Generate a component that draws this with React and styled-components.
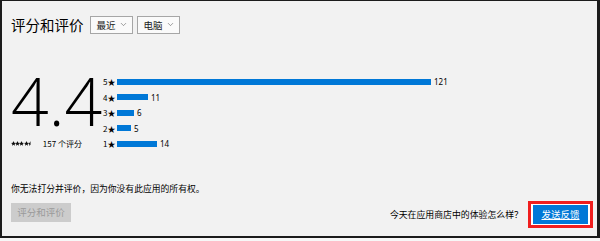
import React from 'react';
import styled, { createGlobalStyle } from 'styled-components';
import { ChevronDown } from 'lucide-react';

const GlobalStyle = createGlobalStyle`
	body {
		margin: 0;
		background-color: #f7f7f7;
		font-family: "Noto Sans CJK SC", "Noto Sans", sans-serif;
		color: #000;
	}
`;

const Frame = styled.div`
	box-sizing: border-box;
	width: 600px;
	height: 238px;
	background-color: #f2f2f2;
	border-top: 1px solid #1c1c1c;
	border-left: 2px solid #1c1c1c;
	border-right: 3px solid #1c1c1c;
	border-bottom: 2px solid #1c1c1c;
	padding: 0 4px 0 9px;
	display: flex;
	flex-direction: column;
`;

const Header = styled.div`
	display: flex;
	align-items: center;
	gap: 4px;
	margin-top: 14px;
	height: 19px;
`;

const Title = styled.h2`
	margin: 0 2px 0 0;
	font-size: 14.5px;
	font-weight: 400;
	line-height: 19px;
`;

const Dropdown = styled.div`
	box-sizing: border-box;
	width: 43px;
	height: 18px;
	border: 1px solid #a6a6a6;
	background-color: #fafafa;
	display: flex;
	align-items: center;
	justify-content: space-between;
	padding: 0 4px 0 6px;
	font-size: 9.5px;
	color: #222;
`;

const Summary = styled.div`
	display: flex;
	margin-top: 40px;
`;

const RatingBlock = styled.div`
	width: 92px;
	display: flex;
	flex-direction: column;
`;

const BigNumber = styled.div`
	font-family: "Open Sans", sans-serif;
	font-weight: 300;
	font-size: 66px;
	line-height: 66px;
	margin-top: -7px;
`;

const StarLine = styled.div`
	display: flex;
	align-items: center;
	margin-top: 4px;
	height: 12px;
	font-size: 8px;
	gap: 10px;
	white-space: nowrap;
`;

const Stars = styled.span`
	display: flex;
	align-items: center;
	gap: 0;
	& > svg + svg {
		margin-left: -0.8px;
	}
`;

const Histogram = styled.div`
	display: flex;
	flex-direction: column;
`;

const Row = styled.div`
	display: flex;
	align-items: center;
	height: 15.5px;
	font-family: "Noto Sans", sans-serif;
	font-size: 8px;
`;

const RowLabel = styled.span`
	width: 14px;
	font-family: "Noto Sans CJK SC", sans-serif;
`;

const Bar = styled.div`
	height: 6px;
	background-color: #0078d7;
	margin-right: 3px;
`;

const Notice = styled.div`
	margin-top: 30px;
	font-size: 8.8px;
	line-height: 14px;
`;

const BottomRow = styled.div`
	display: flex;
	justify-content: space-between;
	align-items: center;
	margin-top: 5px;
	height: 27px;
`;

const RateButton = styled.button`
	align-self: flex-start;
	margin-top: 2px;
	width: 60px;
	height: 19px;
	border: none;
	background-color: #cccccc;
	color: #9a9a9a;
	font-family: inherit;
	font-size: 9.5px;
	padding: 0;
`;

const FeedbackArea = styled.div`
	display: flex;
	align-items: center;
	gap: 5px;
	font-size: 8.9px;
`;

const FocusFrame = styled.div`
	border: 3px solid #f01e1e;
	padding: 1px 2px;
	background-color: #fff;
	display: flex;
`;

const FeedbackButton = styled.button`
	width: 55px;
	height: 19px;
	border: none;
	background-color: #0078d7;
	color: #fff;
	font-family: inherit;
	font-size: 9.5px;
	text-decoration: underline;
	padding: 0;
`;

const Star = ({ fill = 1 }) => (
	<svg width="5" height="5" viewBox="1 1 22 22">
		<defs>
			<clipPath id={`c${fill}`}>
				<rect x="0" y="0" width={1 + 22 * fill} height="24" />
			</clipPath>
		</defs>
		<path
			d="M12 1.5l3.1 7.2 7.8.6-5.9 5.1 1.8 7.6L12 18l-6.8 4 1.8-7.6-5.9-5.1 7.8-.6z"
			fill="#111"
			clipPath={`url(#c${fill})`}
		/>
	</svg>
);

const rows = [
	{ label: '5★', width: 314, count: 121 },
	{ label: '4★', width: 31, count: 11 },
	{ label: '3★', width: 17, count: 6 },
	{ label: '2★', width: 14, count: 5 },
	{ label: '1★', width: 40, count: 14 },
];

const App = () => (
	<>
		<GlobalStyle />
		<Frame>
			<Header>
				<Title>评分和评价</Title>
				<Dropdown>
					最近 <ChevronDown size={9} strokeWidth={1.5} color="#555" />
				</Dropdown>
				<Dropdown>
					电脑 <ChevronDown size={9} strokeWidth={1.5} color="#555" />
				</Dropdown>
			</Header>
			<Summary>
				<RatingBlock>
					<BigNumber>4.4</BigNumber>
					<StarLine>
						<Stars>
							<Star />
							<Star />
							<Star />
							<Star />
							<Star fill={0.5} />
						</Stars>
						157 个评分
					</StarLine>
				</RatingBlock>
				<Histogram>
					{rows.map((r) => (
						<Row key={r.label}>
							<RowLabel>{r.label}</RowLabel>
							<Bar style={{ width: r.width }} />
							{r.count}
						</Row>
					))}
				</Histogram>
			</Summary>
			<Notice>你无法打分并评价，因为你没有此应用的所有权。</Notice>
			<BottomRow>
				<RateButton disabled>评分和评价</RateButton>
				<FeedbackArea>
					今天在应用商店中的体验怎么样？
					<FocusFrame>
						<FeedbackButton>发送反馈</FeedbackButton>
					</FocusFrame>
				</FeedbackArea>
			</BottomRow>
		</Frame>
	</>
);

export default App;
